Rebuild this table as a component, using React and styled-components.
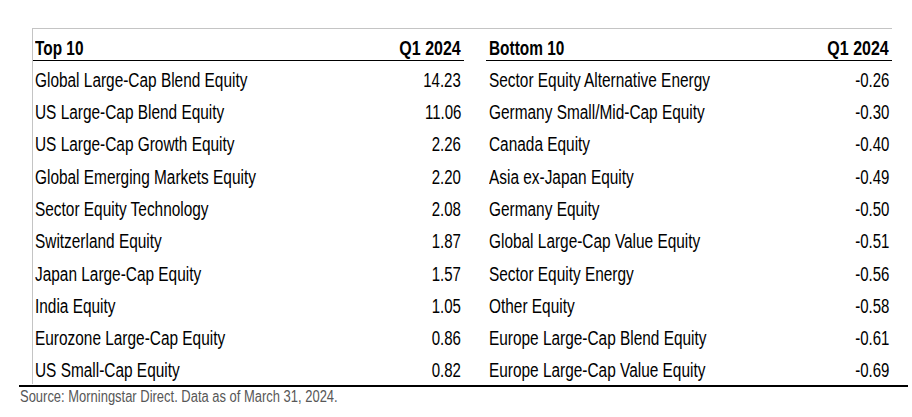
import React from "react";
import styled, { createGlobalStyle } from "styled-components";

const GlobalStyle = createGlobalStyle`
  body {
    margin: 0;
    background: #ffffff;
    font-family: "Liberation Sans", Arial, sans-serif;
    color: #000000;
  }
`;

const Page = styled.div`
  width: 912px;
  height: 417px;
  padding-top: 28px;
  box-sizing: border-box;
`;

const Panel = styled.div`
  display: flex;
  gap: 22px;
  margin-left: 32px;
  width: 860px;
  border-top: 1px solid #c4c4c4;
  border-left: 1px solid #c4c4c4;
  box-sizing: border-box;
`;

const Table = styled.div`
  display: flex;
  flex-direction: column;
  width: ${(props) => props.width}px;
`;

const HeadRow = styled.div`
  display: flex;
  justify-content: space-between;
  align-items: flex-end;
  height: 32px;
  padding: 0 ${(props) => props.padRight}px 2px ${(props) => props.padLeft}px;
  border-bottom: 1px solid #000000;
  box-sizing: border-box;
  font-size: 20px;
  line-height: 1;
  font-weight: 700;
`;

const Row = styled.div`
  display: flex;
  justify-content: space-between;
  align-items: flex-start;
  height: 32.3px;
  padding: 9.8px ${(props) => props.padRight}px 0 ${(props) => props.padLeft}px;
  box-sizing: border-box;
  font-size: 19.5px;
  line-height: 1;
`;

// the reference font is a condensed face; squeeze the installed one to match
const Label = styled.span`
  display: inline-block;
  flex: 0 1 auto;
  min-width: 0;
  white-space: nowrap;
  transform: scaleX(${(props) => props.scale});
  transform-origin: left center;
`;

const Value = styled.span`
  display: inline-block;
  flex: 0 0 auto;
  white-space: nowrap;
  transform: scaleX(${(props) => props.scale});
  transform-origin: right center;
`;

const Footer = styled.div`
  margin-left: 19px;
  width: 888px;
  margin-top: 1px;
  border-top: 2px solid #000000;
  padding: 2px 0 0 1px;
  font-size: 16px;
  line-height: 1;
  color: #575757;
`;

const top10 = [
  ["Global Large-Cap Blend Equity", "14.23"],
  ["US Large-Cap Blend Equity", "11.06"],
  ["US Large-Cap Growth Equity", "2.26"],
  ["Global Emerging Markets Equity", "2.20"],
  ["Sector Equity Technology", "2.08"],
  ["Switzerland Equity", "1.87"],
  ["Japan Large-Cap Equity", "1.57"],
  ["India Equity", "1.05"],
  ["Eurozone Large-Cap Equity", "0.86"],
  ["US Small-Cap Equity", "0.82"],
];

const bottom10 = [
  ["Sector Equity Alternative Energy", "-0.26"],
  ["Germany Small/Mid-Cap Equity", "-0.30"],
  ["Canada Equity", "-0.40"],
  ["Asia ex-Japan Equity", "-0.49"],
  ["Germany Equity", "-0.50"],
  ["Global Large-Cap Value Equity", "-0.51"],
  ["Sector Equity Energy", "-0.56"],
  ["Other Equity", "-0.58"],
  ["Europe Large-Cap Blend Equity", "-0.61"],
  ["Europe Large-Cap Value Equity", "-0.69"],
];

const RankTable = ({ title, rows, width, padLeft, padRight }) => (
  <Table width={width}>
    <HeadRow padLeft={padLeft} padRight={padRight}>
      <Label scale={0.77}>{title}</Label>
      <Value scale={0.8}>Q1 2024</Value>
    </HeadRow>
    {rows.map(([name, value]) => (
      <Row key={name} padLeft={padLeft} padRight={padRight}>
        <Label scale={0.79}>{name}</Label>
        <Value scale={0.77}>{value}</Value>
      </Row>
    ))}
  </Table>
);

export default function App() {
  return (
    <Page>
      <GlobalStyle />
      <Panel>
        <RankTable title="Top 10" rows={top10} width={431} padLeft={2} padRight={3} />
        <RankTable title="Bottom 10" rows={bottom10} width={406} padLeft={3} padRight={3} />
      </Panel>
      <Footer>
        <Label scale={0.81}>Source: Morningstar Direct. Data as of March 31, 2024.</Label>
      </Footer>
    </Page>
  );
}
